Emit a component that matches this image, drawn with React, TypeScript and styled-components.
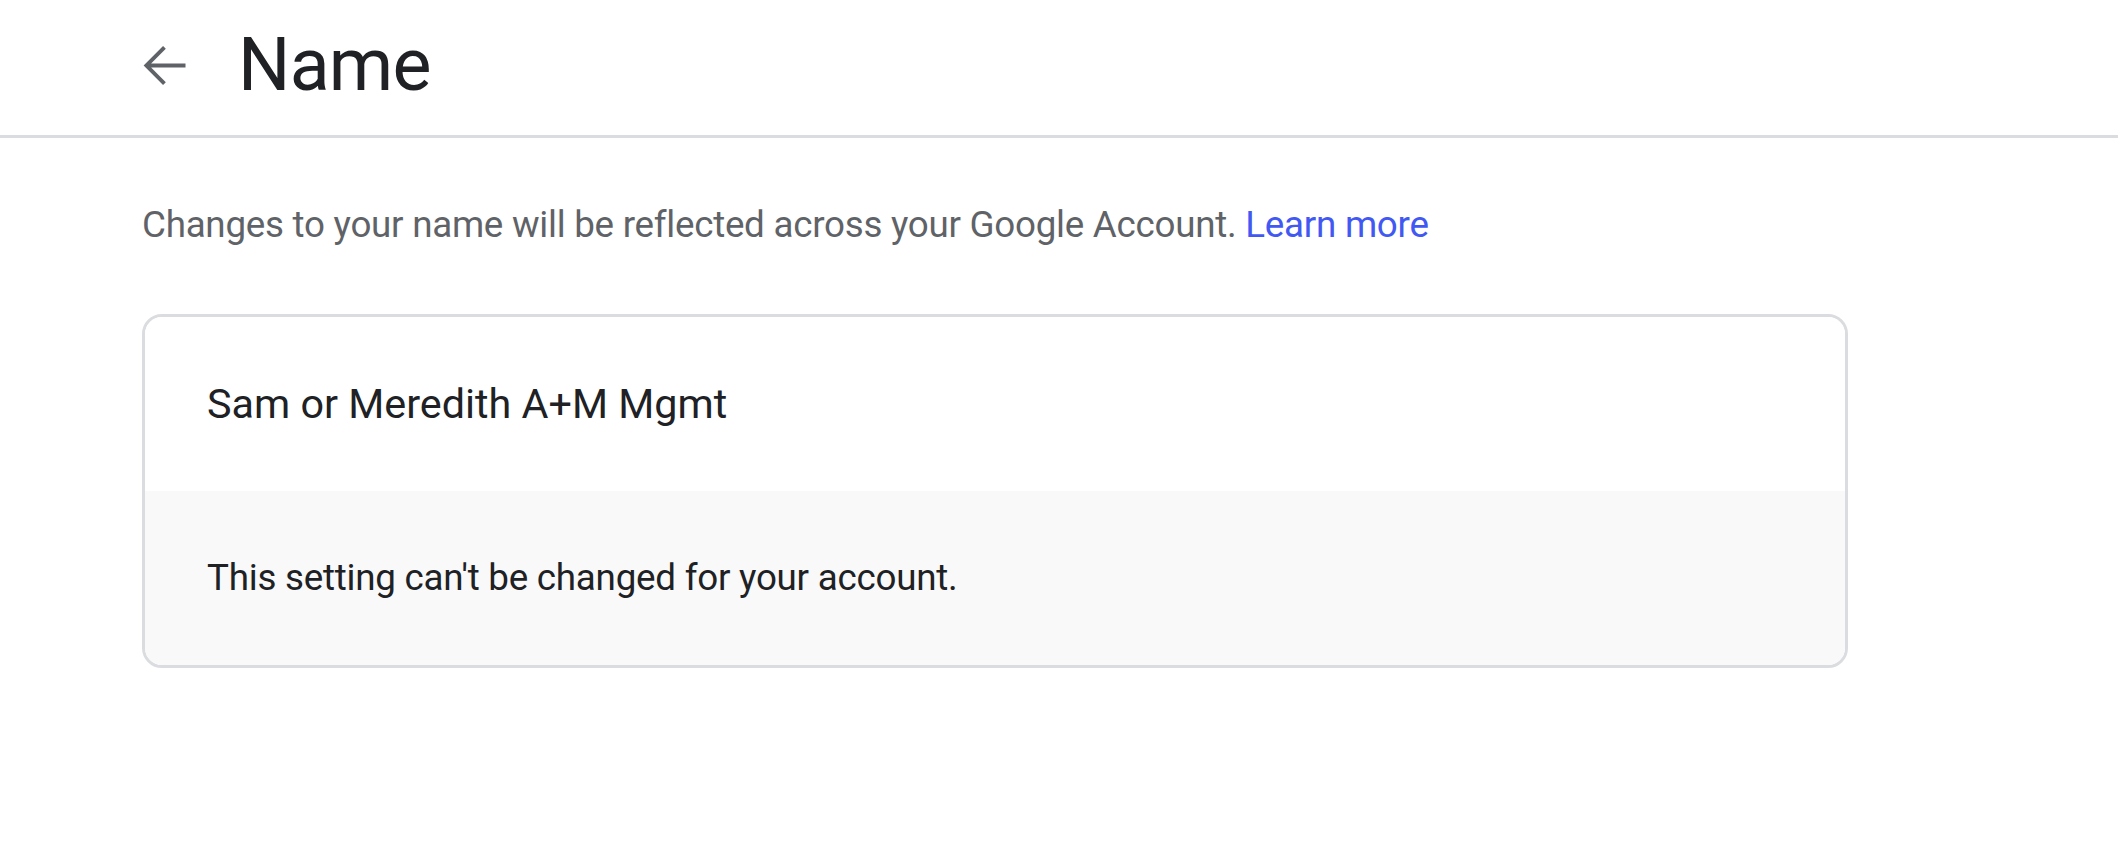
import styled, {createGlobalStyle} from "styled-components";

const GlobalStyle = createGlobalStyle`
    body {
        margin: 0;
        background: #fff;
        font-family: Roboto, "Liberation Sans", Arial, sans-serif;
        color: #202124;
    }
`

const Header = styled.header`
    box-sizing: border-box;
    height: 138px;
    padding: 0 0 5px 133px;
    display: flex;
    align-items: center;
    border-bottom: 3px solid #dadce0;
`

const BackButton = styled.button`
    width: 63px;
    height: 63px;
    padding: 0;
    border: none;
    background: none;
    display: flex;
    align-items: center;
    justify-content: center;
    color: #5f6368;
    cursor: pointer;
`

const Title = styled.h1`
    margin: 0 0 0 42px;
    font-size: 73.5px;
    font-weight: 400;
    line-height: 86px;
    letter-spacing: -0.8px;
    color: #202124;
`

const Main = styled.main`
    padding: 61px 0 0 142px;
`

const Description = styled.p`
    margin: 0;
    font-size: 36.75px;
    line-height: 52.5px;
    letter-spacing: -0.26px;
    color: #5f6368;
`

const Link = styled.a`
    color: #4158f3;
    text-decoration: none;
`

const Card = styled.section`
    box-sizing: border-box;
    width: 1706px;
    margin-top: 62px;
    border: 3px solid #dadce0;
    border-radius: 20px;
    overflow: hidden;
`

const Row = styled.div<{ $muted?: boolean }>`
    height: 174px;
    padding: 0 62px;
    display: flex;
    align-items: center;
    background: ${props => props.$muted ? "#f9f9f9" : "#fff"};
`

const NameValue = styled.span`
    font-size: 41.3px;
    color: #202124;
`

const Note = styled.span`
    font-size: 36.75px;
    letter-spacing: -0.24px;
    color: #202124;
`

const ArrowBack = () => (
    <svg width="63" height="63" viewBox="0 0 24 24" fill="currentColor">
        <path d="M20 11.25H6.9l5.6-5.6L11.45 4.6 4.05 12l7.4 7.4 1.05-1.05-5.6-5.6H20z"/>
    </svg>
)

export default function App() {
    return (
        <>
            <GlobalStyle/>
            <Header>
                <BackButton aria-label="Back">
                    <ArrowBack/>
                </BackButton>
                <Title>Name</Title>
            </Header>
            <Main>
                <Description>
                    Changes to your name will be reflected across your Google Account. <Link href="#">Learn more</Link>
                </Description>
                <Card>
                    <Row>
                        <NameValue>Sam or Meredith A+M Mgmt</NameValue>
                    </Row>
                    <Row $muted>
                        <Note>This setting can't be changed for your account.</Note>
                    </Row>
                </Card>
            </Main>
        </>
    );
}
